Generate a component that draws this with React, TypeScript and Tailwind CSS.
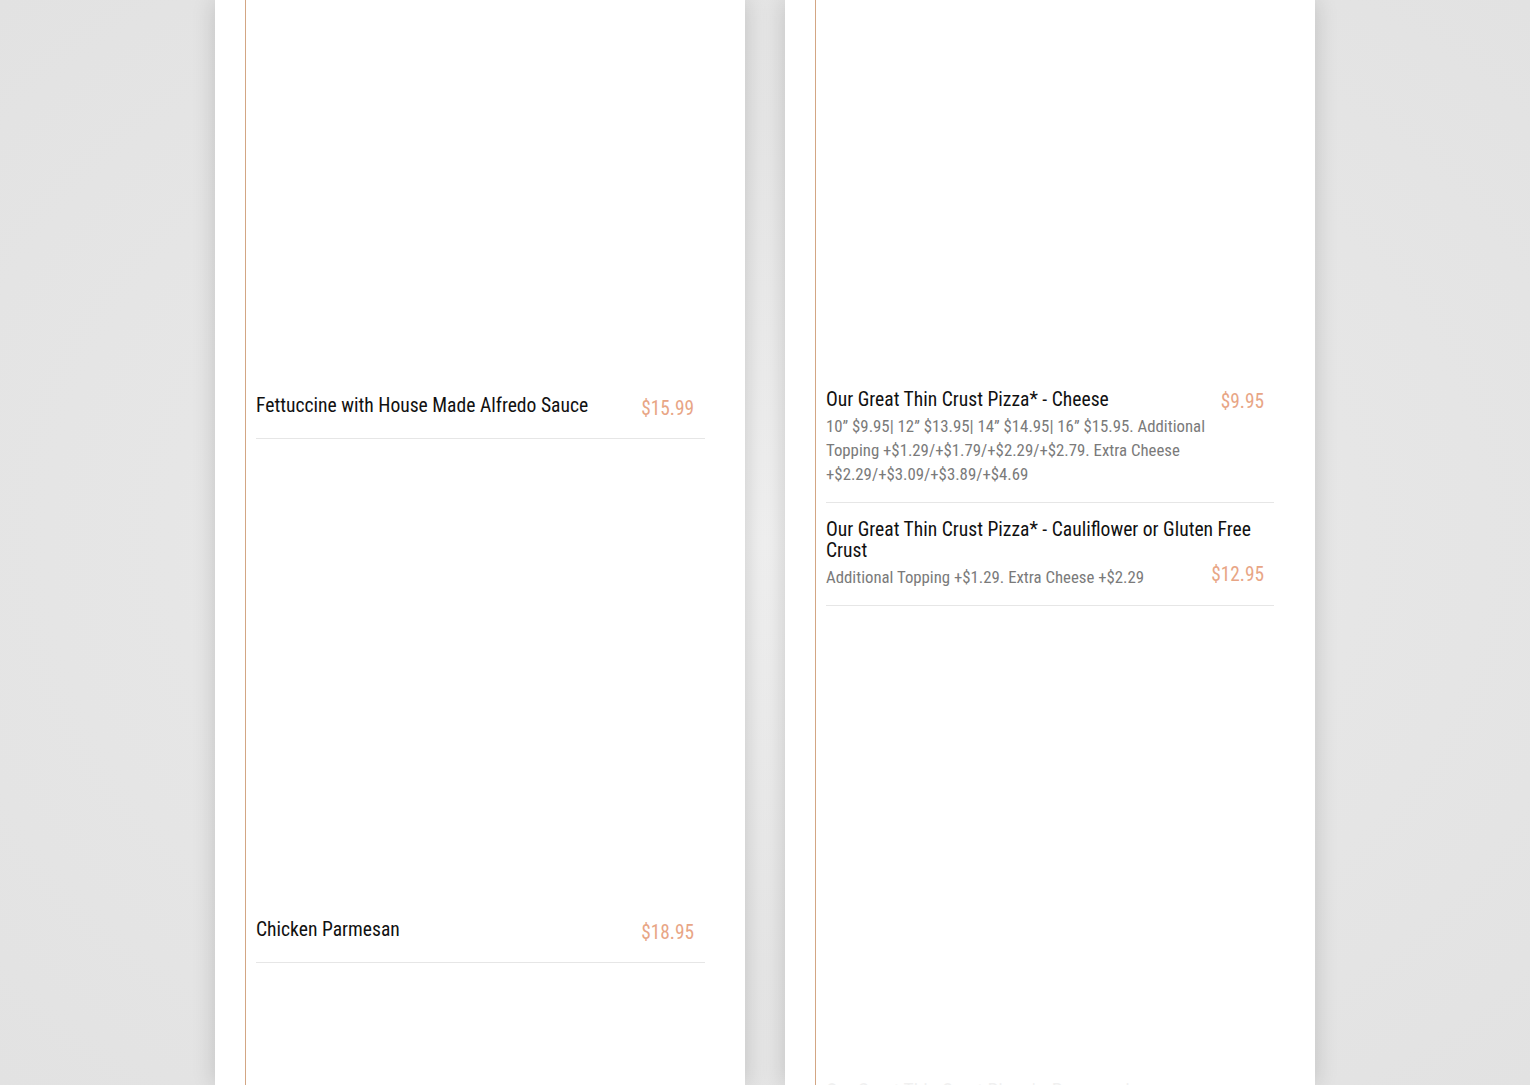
import React from "react";

const font = { fontFamily: '"Roboto Condensed", "Liberation Sans Narrow", "Roboto", sans-serif', fontStretch: "condensed" as const };

function SimpleRow({ title, price }: { title: string; price: string }) {
  return (
    <div className="flex items-start justify-between pt-[2px] pb-[18px] pr-[11px] border-b border-[#e6e6e6]">
      <div className="text-[19.6px] leading-[28px] text-[#111]">{title}</div>
      <div className="text-[19.3px] leading-[23px] mt-[5px] text-[#e8a585]">{price}</div>
    </div>
  );
}

export default function App() {
  return (
    <div
      className="w-[1530px] h-[1085px] overflow-hidden flex justify-center gap-[40px] bg-[radial-gradient(ellipse_at_center,#f0f0f0_0%,#e6e6e6_55%,#e2e2e2_100%)]"
      style={font}
    >
      {/* Left panel */}
      <div className="w-[530px] h-full bg-white shadow-[0_0_22px_rgba(0,0,0,0.16)] pl-[30px] pr-[40px]">
        <div className="h-full border-l border-[#d3a684] pl-[10px]">
          <div className="h-[390px]" />
          <SimpleRow title="Fettuccine with House Made Alfredo Sauce" price="$15.99" />
          <div className="h-[475px]" />
          <SimpleRow title="Chicken Parmesan" price="$18.95" />
        </div>
      </div>

      {/* Right panel */}
      <div className="w-[530px] h-full bg-white shadow-[0_0_22px_rgba(0,0,0,0.16)] pl-[30px] pr-[41px]">
        <div className="h-full border-l border-[#d3a684] pl-[10px]">
          <div className="h-[372px]" />
          <div className="flex items-start justify-between pt-[17px] pb-[16px] pr-[10px] border-b border-[#e6e6e6]">
            <div className="w-[388px]">
              <div className="text-[19.6px] leading-[21px] text-[#111]">Our Great Thin Crust Pizza* - Cheese</div>
              <div className="mt-[4px] text-[16.8px] leading-[24px] text-[#7a7a7a]">
                10” $9.95| 12” $13.95| 14” $14.95| 16” $15.95. Additional Topping +$1.29/+$1.79/+$2.29/+$2.79. Extra Cheese +$2.29/+$3.09/+$3.89/+$4.69
              </div>
            </div>
            <div className="text-[19.3px] leading-[28px] -mt-[1px] text-[#e8a585]">$9.95</div>
          </div>
          <div className="pt-[16px] pb-[16px] pr-[10px] border-b border-[#e6e6e6]">
            <div className="text-[19.6px] leading-[21px] text-[#111]">Our Great Thin Crust Pizza* - Cauliflower or Gluten Free Crust</div>
            <div className="flex items-start justify-between mt-[4px]">
              <div className="text-[16.8px] leading-[24px] text-[#7a7a7a]">Additional Topping +$1.29. Extra Cheese +$2.29</div>
              <div className="text-[19.3px] leading-[28px] -mt-[4px] text-[#e8a585]">$12.95</div>
            </div>
          </div>
          <div className="h-[460px]" />
          <div className="pt-[15px] text-[19.6px] leading-[21px] text-[#111] opacity-[0.06]">Our Great Thin Crust Pizza* - Pepperoni</div>
        </div>
      </div>
    </div>
  );
}
